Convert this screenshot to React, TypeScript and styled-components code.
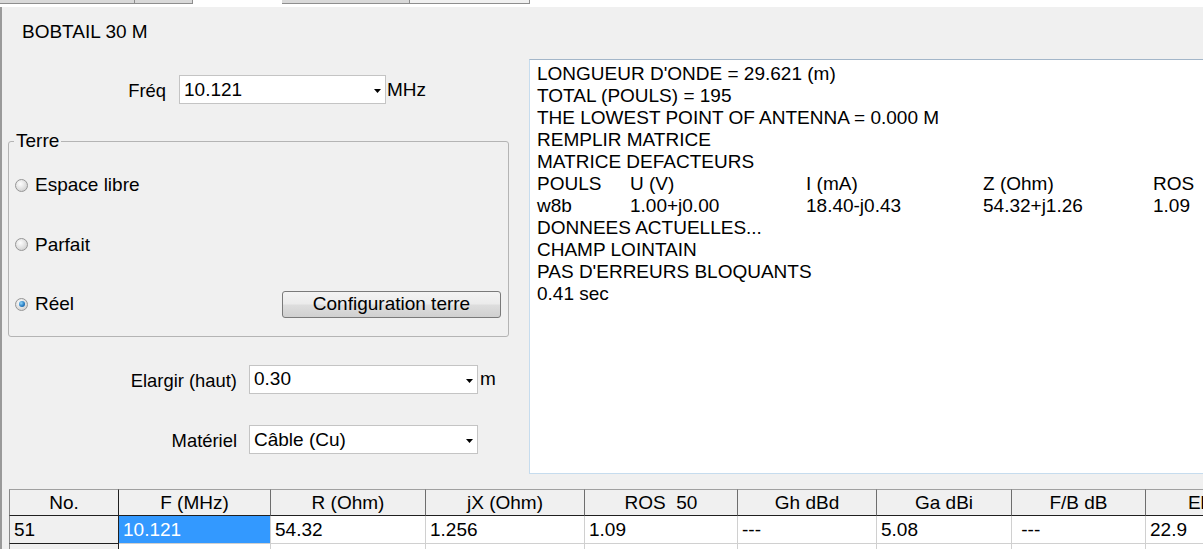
import styled, { createGlobalStyle } from "styled-components";

const GlobalStyle = createGlobalStyle`
  html, body {
    margin: 0;
    padding: 0;
  }
  body {
    width: 1203px;
    height: 549px;
    overflow: hidden;
    background: #ffffff;
    font-family: "Liberation Sans", Arial, sans-serif;
    font-size: 19px;
    color: #000000;
  }
`;

const TabStrip = styled.div`
  display: flex;
  height: 7px;
  background: #ffffff;
`;

type TabKind = "idle" | "active" | "light";

const Tab = styled.div<{ $w: number; $kind: TabKind }>`
  width: ${(p) => p.$w}px;
  height: ${(p) => (p.$kind === "active" ? 7 : 4)}px;
  box-sizing: border-box;
  background: ${(p) =>
    p.$kind === "active" ? "#ffffff" : p.$kind === "light" ? "#f0f0f0" : "#d9d9d9"};
  border: ${(p) => (p.$kind === "active" ? "none" : "1px solid #8e8e8e")};
  border-top: none;
  border-left: none;
`;

const Page = styled.div`
  height: 542px;
  box-sizing: border-box;
  background: #f0f0f0;
  border-left: 2px solid #9a9a9a;
  display: flex;
  flex-direction: column;
  overflow: hidden;
`;

const Title = styled.div`
  margin: 14px 0 0 20px;
  line-height: 22px;
`;

const Body = styled.div`
  display: grid;
  grid-template-columns: 527px 720px;
  margin-top: 16px;
`;

const LeftCol = styled.div`
  display: flex;
  flex-direction: column;
`;

const FieldRow = styled.div<{ $top: number }>`
  display: flex;
  align-items: center;
  height: 29px;
  margin-top: ${(p) => p.$top}px;
`;

const FieldLabel = styled.span<{ $w: number }>`
  width: ${(p) => p.$w}px;
  text-align: right;
  font-size: 18.4px;
  line-height: 22px;
  padding-top: 3px;
  white-space: nowrap;
`;

const Combo = styled.div<{ $w: number; $gap: number }>`
  width: ${(p) => p.$w}px;
  height: 29px;
  box-sizing: border-box;
  margin-left: ${(p) => p.$gap}px;
  padding: 0 4px 0 4px;
  background: #ffffff;
  border: 1px solid #c4c4c4;
  display: flex;
  align-items: center;
  justify-content: space-between;
  line-height: 22px;
  white-space: nowrap;
`;

const Arrow = styled.svg`
  width: 7px;
  height: 4px;
  margin-top: 3px;
  flex-shrink: 0;
`;

const Unit = styled.span<{ $gap: number }>`
  margin-left: ${(p) => p.$gap}px;
  line-height: 22px;
`;

const GroupBox = styled.fieldset`
  margin: 26px 0 0 6px;
  padding: 0;
  width: 501px;
  min-width: 0;
  box-sizing: border-box;
  border: 1px solid #b4b4b4;
  border-radius: 3px;
`;

const Legend = styled.legend`
  margin-left: 5px;
  padding: 0 2px;
  line-height: 22px;
`;

const RadioList = styled.div`
  display: flex;
  flex-direction: column;
  gap: 32.5px;
  padding: 19.5px 7px 18px 6px;
`;

const RadioRow = styled.div`
  display: flex;
  align-items: center;
  height: 27px;
  line-height: 22px;
`;

const RadioMark = styled.span<{ $checked?: boolean }>`
  width: 13px;
  height: 13px;
  box-sizing: border-box;
  flex-shrink: 0;
  margin-right: 7px;
  border-radius: 50%;
  border: 1px solid #969696;
  background: radial-gradient(circle at 40% 35%, #fdfdfd 0%, #e2e2e2 50%, #c6c6c6 100%);
  display: flex;
  align-items: center;
  justify-content: center;

  &::after {
    content: "";
    display: ${(p) => (p.$checked ? "block" : "none")};
    width: 6px;
    height: 6px;
    border-radius: 50%;
    background: radial-gradient(circle at 35% 35%, #8fd6fb 0%, #2a7fc4 55%, #0e4f8e 100%);
  }
`;

const PushButton = styled.button`
  margin-left: auto;
  width: 219px;
  height: 27px;
  padding: 0;
  font: inherit;
  color: #000000;
  border: 1px solid #7a7a7a;
  border-radius: 3px;
  background: linear-gradient(#f3f3f3 0%, #ebebeb 48%, #dddddd 52%, #d0d0d0 100%);
`;

const Output = styled.div`
  height: 415px;
  box-sizing: border-box;
  padding: 3px 0 0 7px;
  background: #ffffff;
  border: 1px solid #c6dcee;
  border-top-color: #a3b6c9;
  line-height: 22px;
  white-space: nowrap;
`;

const OutRow = styled.div`
  display: grid;
  grid-template-columns: 93px 176px 177px 170px auto;
`;

const DataGrid = styled.table`
  margin: 15px 0 0 7px;
  border-collapse: separate;
  border-spacing: 0;
  table-layout: fixed;
  width: 1300px;
`;

const HeadCell = styled.th<{ $w: number; $first?: boolean }>`
  width: ${(p) => p.$w}px;
  height: 27px;
  box-sizing: border-box;
  padding: 0;
  font-weight: normal;
  text-align: center;
  line-height: 22px;
  background: #f0f0f0;
  border-top: 1px solid #a0a0a0;
  border-left: ${(p) => (p.$first ? "1px solid #8a8a8a" : "none")};
  border-right: 1px solid ${(p) => (p.$first ? "#202020" : "#6e6e6e")};
  border-bottom: 1px solid #202020;
  white-space: pre;
  overflow: hidden;
`;

type CellKind = "plain" | "rowhead" | "selected";

const Cell = styled.td<{ $kind?: CellKind }>`
  height: 28px;
  box-sizing: border-box;
  padding: 0 0 0 4px;
  line-height: 22px;
  white-space: pre;
  overflow: hidden;
  background: ${(p) =>
    p.$kind === "selected" ? "#3399ff" : p.$kind === "rowhead" ? "#f0f0f0" : "#ffffff"};
  color: ${(p) => (p.$kind === "selected" ? "#ffffff" : "#000000")};
  border-left: ${(p) => (p.$kind === "rowhead" ? "1px solid #8a8a8a" : "none")};
  border-right: 1px solid ${(p) => (p.$kind === "rowhead" ? "#202020" : "#d0d0d0")};
  border-bottom: 1px solid ${(p) => (p.$kind === "rowhead" ? "#202020" : "#d0d0d0")};
`;

const tabs: { w: number; kind: TabKind }[] = [
  { w: 135, kind: "idle" },
  { w: 58, kind: "idle" },
  { w: 89, kind: "active" },
  { w: 128, kind: "idle" },
  { w: 120, kind: "light" },
];

const outputLines = [
  "LONGUEUR D'ONDE = 29.621 (m)",
  "TOTAL (POULS) = 195",
  "THE LOWEST POINT OF ANTENNA = 0.000 M",
  "REMPLIR MATRICE",
  "MATRICE DEFACTEURS",
];

const outputTail = [
  "DONNEES ACTUELLES...",
  "CHAMP LOINTAIN",
  "PAS D'ERREURS BLOQUANTS",
  "0.41 sec",
];

const columns = [
  { title: "No.", w: 110 },
  { title: "F (MHz)", w: 152 },
  { title: "R (Ohm)", w: 155 },
  { title: "jX (Ohm)", w: 159 },
  { title: "ROS  50", w: 153 },
  { title: "Gh dBd", w: 139 },
  { title: "Ga dBi", w: 135 },
  { title: "F/B dB", w: 134 },
  { title: "Elevation", w: 163 },
];

const row = ["51", "10.121", "54.32", "1.256", "1.09", "---", "5.08", " ---", "22.9"];

function DropArrow() {
  return (
    <Arrow viewBox="0 0 7 4">
      <polygon points="0,0 7,0 3.5,4" fill="#000" />
    </Arrow>
  );
}

export default function App() {
  return (
    <>
      <GlobalStyle />
      <TabStrip>
        {tabs.map((t, i) => (
          <Tab key={i} $w={t.w} $kind={t.kind} />
        ))}
      </TabStrip>
      <Page>
        <Title>BOBTAIL 30 M</Title>
        <Body>
          <LeftCol>
            <FieldRow $top={16}>
              <FieldLabel $w={164}>Fréq</FieldLabel>
              <Combo $w={207} $gap={13}>
                <span>10.121</span>
                <DropArrow />
              </Combo>
              <Unit $gap={1}>MHz</Unit>
            </FieldRow>

            <GroupBox>
              <Legend>Terre</Legend>
              <RadioList>
                <RadioRow>
                  <RadioMark />
                  Espace libre
                </RadioRow>
                <RadioRow>
                  <RadioMark />
                  Parfait
                </RadioRow>
                <RadioRow>
                  <RadioMark $checked />
                  Réel
                  <PushButton>Configuration terre</PushButton>
                </RadioRow>
              </RadioList>
            </GroupBox>

            <FieldRow $top={28}>
              <FieldLabel $w={235}>Elargir (haut)</FieldLabel>
              <Combo $w={229} $gap={12}>
                <span>0.30</span>
                <DropArrow />
              </Combo>
              <Unit $gap={2}>m</Unit>
            </FieldRow>

            <FieldRow $top={31.5}>
              <FieldLabel $w={235}>Matériel</FieldLabel>
              <Combo $w={229} $gap={12}>
                <span>Câble (Cu)</span>
                <DropArrow />
              </Combo>
            </FieldRow>
          </LeftCol>

          <Output>
            {outputLines.map((l) => (
              <div key={l}>{l}</div>
            ))}
            <OutRow>
              <span>POULS</span>
              <span>U (V)</span>
              <span>I (mA)</span>
              <span>Z (Ohm)</span>
              <span>ROS</span>
            </OutRow>
            <OutRow>
              <span>w8b</span>
              <span>1.00+j0.00</span>
              <span>18.40-j0.43</span>
              <span>54.32+j1.26</span>
              <span>1.09</span>
            </OutRow>
            {outputTail.map((l) => (
              <div key={l}>{l}</div>
            ))}
          </Output>
        </Body>

        <DataGrid>
          <thead>
            <tr>
              {columns.map((c, i) => (
                <HeadCell key={c.title} $w={c.w} $first={i === 0}>
                  {c.title}
                </HeadCell>
              ))}
            </tr>
          </thead>
          <tbody>
            <tr>
              {row.map((v, i) => (
                <Cell key={i} $kind={i === 0 ? "rowhead" : i === 1 ? "selected" : "plain"}>
                  {v}
                </Cell>
              ))}
            </tr>
            <tr>
              {columns.map((c, i) => (
                <Cell key={c.title} $kind={i === 0 ? "rowhead" : "plain"} />
              ))}
            </tr>
          </tbody>
        </DataGrid>
      </Page>
    </>
  );
}
